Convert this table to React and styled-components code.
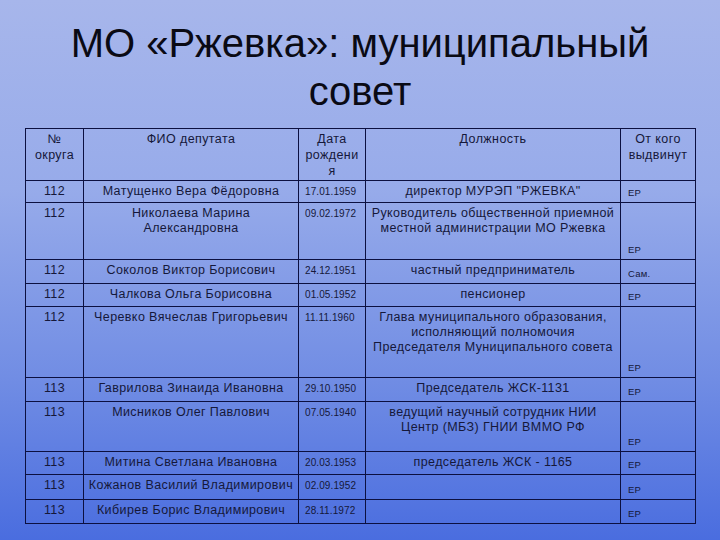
import React from 'react'
import styled, { createGlobalStyle } from 'styled-components'

const GlobalStyle = createGlobalStyle`
  html, body {
    margin: 0;
    padding: 0;
  }
  body {
    width: 720px;
    height: 540px;
    overflow: hidden;
    background: linear-gradient(180deg, #a7b6eb 0%, #97abea 35%, #718de4 70%, #4a6ddf 100%);
    font-family: "Liberation Sans", Arial, sans-serif;
  }
`

const Slide = styled.div`
  width: 720px;
  height: 540px;
  display: flex;
  flex-direction: column;
  align-items: center;
  padding-top: 19px;
  box-sizing: border-box;
`

const Title = styled.h1`
  margin: 0;
  font-family: "Liberation Sans", Arial, sans-serif;
  font-weight: normal;
  font-size: 40px;
  line-height: 48px;
  color: #0a0a14;
  text-align: center;
`

const Table = styled.table`
  margin-top: 13px;
  margin-left: 25px;
  align-self: flex-start;
  width: 670px;
  border-collapse: collapse;
  table-layout: fixed;
  color: #15183a;
`

const Cell = styled.td`
  border: 1.5px solid #0c1040;
  padding: ${({ $pad }) => $pad || '3px 3px'};
  vertical-align: ${({ $valign }) => $valign || 'top'};
  text-align: ${({ $align }) => $align || 'center'};
  font-size: ${({ $size }) => $size || '12.5px'};
  letter-spacing: ${({ $spacing }) => $spacing || '0.4px'};
  line-height: 15px;
`

const HeadCell = styled(Cell).attrs({ as: 'th' })`
  font-weight: normal;
  padding: 2px 3px 0;
  line-height: 16px;
`

const Row = styled.tr`
  height: ${({ $h }) => $h}px;
`

const widths = [58, 215, 67, 255, 75]

const rows = [
  { n: '112', name: 'Матущенко Вера Фёдоровна', date: '17.01.1959', pos: 'директор МУРЭП "РЖЕВКА"', by: 'ЕР', h: 22 },
  { n: '112', name: ['Николаева Марина', 'Александровна'], date: '09.02.1972', pos: ['Руководитель общественной приемной', 'местной администрации МО Ржевка'], by: 'ЕР', h: 57 },
  { n: '112', name: 'Соколов Виктор Борисович', date: '24.12.1951', pos: 'частный предприниматель', by: 'Сам.', h: 24 },
  { n: '112', name: 'Чалкова Ольга Борисовна', date: '01.05.1952', pos: 'пенсионер', by: 'ЕР', h: 23 },
  { n: '112', name: 'Черевко Вячеслав Григорьевич', date: '11.11.1960', pos: ['Глава муниципального образования,', 'исполняющий полномочия', 'Председателя Муниципального совета'], by: 'ЕР', h: 71 },
  { n: '113', name: 'Гаврилова Зинаида Ивановна', date: '29.10.1950', pos: 'Председатель ЖСК-1131', by: 'ЕР', h: 24 },
  { n: '113', name: 'Мисников Олег Павлович', date: '07.05.1940', pos: ['ведущий научный сотрудник НИИ', 'Центр (МБЗ) ГНИИ ВММО РФ'], by: 'ЕР', h: 50 },
  { n: '113', name: 'Митина Светлана Ивановна', date: '20.03.1953', pos: 'председатель ЖСК - 1165', by: 'ЕР', h: 23 },
  { n: '113', name: 'Кожанов Василий Владимирович', date: '02.09.1952', pos: '', by: 'ЕР', h: 25 },
  { n: '113', name: 'Кибирев Борис Владимирович', date: '28.11.1972', pos: '', by: 'ЕР', h: 24 },
]

const Lines = ({ text }) => {
  if (!Array.isArray(text)) return text
  return text.map((line, i) => (
    <React.Fragment key={i}>
      {i > 0 && <br />}
      {line}
    </React.Fragment>
  ))
}

export default function App() {
  return (
    <>
      <GlobalStyle />
      <Slide>
        <Title>
          МО «Ржевка»: муниципальный
          <br />
          совет
        </Title>
        <Table>
          <colgroup>
            {widths.map((w, i) => <col key={i} style={{ width: w }} />)}
          </colgroup>
          <thead>
            <Row $h={52}>
              <HeadCell>№<br />округа</HeadCell>
              <HeadCell>ФИО депутата</HeadCell>
              <HeadCell>Дата<br />рождени<br />я</HeadCell>
              <HeadCell>Должность</HeadCell>
              <HeadCell>От кого<br />выдвинут</HeadCell>
            </Row>
          </thead>
          <tbody>
            {rows.map((r, i) => (
              <Row key={i} $h={r.h}>
                <Cell>{r.n}</Cell>
                <Cell><Lines text={r.name} /></Cell>
                <Cell $align="left" $size="10px" $spacing="0.1px" $pad="3px 6px">{r.date}</Cell>
                <Cell><Lines text={r.pos} /></Cell>
                <Cell $align="left" $valign="bottom" $size="9.5px" $spacing="0.2px" $pad="2px 7px">{r.by}</Cell>
              </Row>
            ))}
          </tbody>
        </Table>
      </Slide>
    </>
  )
}
